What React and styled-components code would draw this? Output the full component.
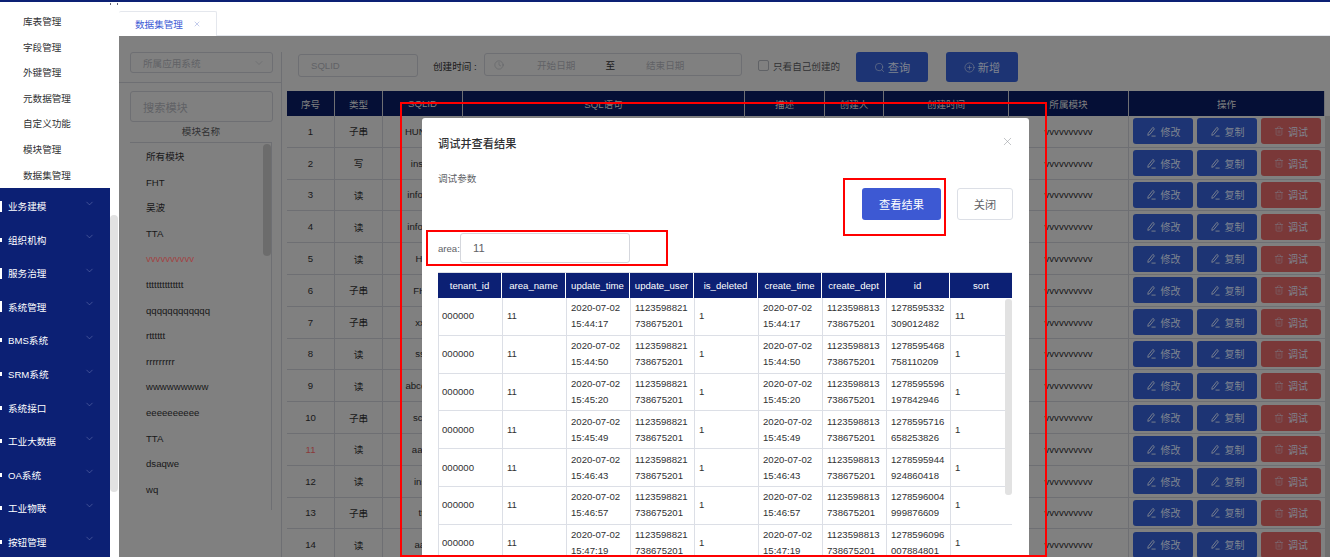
import React from "react";
import styled, { createGlobalStyle } from "styled-components";
import { ChevronDown, X, Search, CirclePlus, Clock, Trash2 } from "lucide-react";

const Global = createGlobalStyle`
  html, body { margin: 0; padding: 0; background: #fff; }
  body { font-family: "Liberation Sans", "Noto Sans CJK SC", sans-serif; font-size: 9.6px; color: #303133; }
  * { box-sizing: border-box; }
`;

const Page = styled.div`position: relative; width: 1330px; height: 557px; overflow: hidden; display: flex; flex-direction: column;`;
const TopBar = styled.div`height: 2px; background: #0c2074; flex: none;`;
const Body = styled.div`flex: 1; display: flex; min-height: 0;`;

const Sidebar = styled.aside`position: relative; width: 119px; flex: none; background: #fff; overflow: hidden;`;
const MenuCol = styled.div`width: 110px; height: 100%; display: flex; flex-direction: column;`;
const SubList = styled.div`padding-top: 7px; height: 186px; flex: none;`;
const SubItem = styled.div`height: 25.6px; line-height: 25.6px; padding-left: 23px; color: #303133;`;
const NavyList = styled.div`flex: 1; background: #0c2074; padding-top: 1.5px;`;
const NavyItem = styled.div`height: 33.55px; display: flex; align-items: center; color: #fff; gap: 6px; svg { margin-left: auto; margin-right: 15px; margin-top: -6px; color: #7d88bd; }`;
const Stub = styled.i`width: 2px; height: ${p => (p.$tall ? "11px" : "4px")}; background: #fff; flex: none; display: block;`;
const SideThumb = styled.div`position: absolute; left: 110px; top: 213px; width: 8px; height: 277px; background: #e2e2e2; border-radius: 4px;`;
const CornerMark = styled.div`position: absolute; left: 110px; top: 1px; width: 8px; height: 2px; border-left: 1px solid #667; border-right: 1px solid #667;`;

const Main = styled.main`flex: 1; min-width: 0; display: flex; flex-direction: column; position: relative;`;
const TabBar = styled.div`height: 34px; flex: none; padding-top: 9px; border-bottom: 1px solid #e4e7ed; display: flex;`;
const Tab = styled.div`width: 98px; height: 25px; background: #fff; border: 1px solid #e4e7ed; border-bottom: 0; border-left: 0; border-radius: 2px 2px 0 0; display: flex; align-items: center; padding-left: 16px; gap: 10px; color: #3d5bd4; svg { color: #8a9ad8; }`;

const Content = styled.div`flex: 1; min-height: 0; display: flex; background: #808080; color: #181819;`;
const LeftPanel = styled.section`width: 163px; flex: none; border-right: 1px solid #6e6f73; margin-top: 16px; display: flex; flex-direction: column;`;
const SelectBox = styled.div`margin-left: 11px; width: 143px; height: 21px; flex: none; border: 1px solid #6e6f73; border-radius: 3px; padding: 0 7px 0 12px; display: flex; align-items: center; justify-content: space-between; color: #606266;`;
const Rule = styled.div`height: 1px; background: #6e6f73; margin-top: 9px; flex: none;`;
const SearchBox = styled.div`margin: 8px 0 0 11px; width: 143px; height: 31px; flex: none; border: 1px solid #6e6f73; border-radius: 3px; padding-left: 12px; display: flex; align-items: center; color: #606266; font-size: 11.2px;`;
const ListTitle = styled.div`margin-left: 11px; width: 142px; height: 21px; flex: none; border-bottom: 1px solid #6e6f73; text-align: center; line-height: 20px; color: #303133;`;
const ModuleList = styled.div`position: relative; margin-left: 11px; width: 142px; height: 367px; border-right: 1px solid #6e6f73; padding: 1px 0 0 16px;`;
const ModuleItem = styled.div`height: 25.6px; line-height: 25.6px; color: ${p => (p.$red ? "#a04545" : "#181819")};`;
const ListThumb = styled.div`position: absolute; right: 0; top: 1px; width: 8px; height: 112px; background: #6c6c6c; border-radius: 4px;`;

const RightPanel = styled.section`flex: 1; min-width: 0; padding-left: 5px; display: flex; flex-direction: column;`;
const Toolbar = styled.div`height: 55px; flex: none; display: flex; align-items: flex-start; padding: 16px 0 0 11px;`;
const SqlInput = styled.div`width: 120px; height: 23px; margin-top: 2px; border: 1px solid #6e6f73; border-radius: 3px; padding-left: 12px; display: flex; align-items: center; color: #606266;`;
const Label = styled.div`margin: 7px 0 0 15px; width: 51px; color: #181819; white-space: pre;`;
const RangeBox = styled.div`width: 258px; height: 23px; margin-top: 1px; border: 1px solid #6e6f73; border-radius: 3px; display: flex; align-items: center; color: #55575c; padding-left: 9px; svg { flex: none; }`;
const RangeText = styled.span`margin-left: ${p => p.$gap}px; color: ${p => (p.$dark ? "#181819" : "#606266")};`;
const Check = styled.div`width: 11px; height: 11px; margin: 8px 4px 0 16px; border: 1px solid #606266; border-radius: 2px;`;
const CheckLabel = styled.div`margin-top: 7px; width: 83px; color: #303133; white-space: nowrap;`;
const ToolButton = styled.button`width: 72px; height: 30px; border: 0; border-radius: 3px; background: #1d3474; color: #7f8490; font: inherit; font-size: 11.2px; margin-right: ${p => p.$mr || 0}px; display: flex; align-items: center; justify-content: center; gap: 3px; padding: 0;`;

const Grid = styled.div`display: grid; grid-template-columns: 48px 48px 80px 282px 80px 59px 125px 120px 196px; width: 1038px;`;
const HeadRow = styled(Grid)`height: 25px; background: #050f36; color: #808080;`;
const HeadCell = styled.div`display: flex; align-items: center; justify-content: center; border-right: 1px solid #6e6f73; white-space: nowrap;`;
const DataRow = styled(Grid)`height: 31.8px; border-bottom: 1px solid #6e6f73;`;
const DataCell = styled.div`display: flex; align-items: center; justify-content: center; border-right: 1px solid #6e6f73; white-space: nowrap; overflow: hidden; color: ${p => (p.$red ? "#8a3a3a" : "#181819")};`;
const ActionCell = styled.div`display: flex; align-items: center; gap: 4px; padding-left: 4px;`;
const ActBtn = styled.button`width: 60px; height: 26px; border: 0; border-radius: 3px; background: ${p => (p.$danger ? "#7a3838" : "#1d3474")}; color: #7f8490; font: inherit; font-size: 10px; display: flex; align-items: center; justify-content: center; gap: 4px; padding: 0;`;
const TableWrap = styled.div`flex: 1; min-height: 0; overflow: hidden; position: relative;`;
const TableScroll = styled.div`position: absolute; left: 1038px; top: 25px; width: 5px; bottom: 0; background: #6f6f6f;`;

const Modal = styled.div`position: absolute; left: 303px; top: 116px; width: 607px; height: 470px; background: #fff; border-radius: 3px; padding: 0 16px; color: #606266;`;
const ModalHead = styled.div`height: 50px; display: flex; align-items: center; justify-content: space-between;`;
const ModalTitle = styled.div`font-size: 11.2px; color: #303133; font-weight: 500;`;
const Close = styled.span`display: flex; color: #909399; margin-right: -1px; margin-top: -4px;`;
const ActionRow = styled.div`height: 64px; display: flex; justify-content: space-between; align-items: flex-start;`;
const DebugLabel = styled.div`margin-top: 3px; color: #606266;`;
const ModalBtns = styled.div`display: flex; gap: 16px; margin-top: 20px;`;
const PrimaryBtn = styled.button`width: 79px; height: 32px; border: 0; border-radius: 3px; background: #3d59d3; color: #fff; font: inherit; font-size: 11.2px; padding: 0;`;
const PlainBtn = styled.button`width: 56px; height: 32px; border: 1px solid #dcdfe6; border-radius: 3px; background: #fff; color: #606266; font: inherit; font-size: 11.2px; padding: 0;`;
const ParamRow = styled.div`height: 32px; display: flex; align-items: center; margin-bottom: 8px;`;
const ParamName = styled.span`width: 22px; flex: none;`;
const ParamInput = styled.div`width: 170px; height: 30px; border: 1px solid #d5d7dd; border-radius: 3px; display: flex; align-items: center; padding-left: 12px; color: #606266; font-size: 11.2px;`;

const ResultTable = styled.div`position: relative; width: 574px; border-top: 1px solid #dcdfe6;`;
const RGrid = styled.div`display: grid; grid-template-columns: repeat(8, 64px) 62px;`;
const RHead = styled(RGrid)`height: 25px; background: #0c2074; color: #fff;`;
const RHeadCell = styled.div`display: flex; align-items: center; justify-content: center; border-right: 1px solid #fff; &:last-child { border-right: 0; }`;
const RRow = styled(RGrid)`height: 37.8px; border-bottom: 1px solid #dcdfe6; border-left: 1px solid #dcdfe6;`;
const RCell = styled.div`display: flex; align-items: center; padding-left: 4px; line-height: 16px; border-right: 1px solid #dcdfe6; color: #303133; margin-left: ${p => (p.$first ? "-1px" : 0)}; word-break: break-all; &:last-child { border-right: 0; }`;
const RThumb = styled.div`position: absolute; right: 0; top: 26px; width: 7px; height: 196px; background: #e2e2e2; border-radius: 3px;`;

const RedBox = styled.div`position: absolute; left: ${p => p.$x}px; top: ${p => p.$y}px; width: ${p => p.$w}px; height: ${p => p.$h}px; border: 2px solid #f00; pointer-events: none;`;

const Pen = () => (
  <svg width="11" height="11" viewBox="0 0 12 12" fill="none" stroke="currentColor" strokeWidth="1">
    <path d="M7.5 1.5 9.2 3 4 9.5 2 10.2 2.4 8Z" />
    <path d="M6 11h4.5" />
  </svg>
);

const sub = ["库表管理", "字段管理", "外键管理", "元数据管理", "自定义功能", "模块管理", "数据集管理"];
const navy = [["业务建模", 1], ["组织机构", 0], ["服务治理", 1], ["系统管理", 1], ["BMS系统", 0], ["SRM系统", 0], ["系统接口", 0], ["工业大数据", 0], ["OA系统", 0], ["工业物联", 0], ["按钮管理", 0]];
const modules = ["所有模块", "FHT", "吴波", "TTA", "vvvvvvvvvv", "tttttttttttttt", "qqqqqqqqqqqq", "rtttttt", "rrrrrrrrr", "wwwwwwwww", "eeeeeeeeee", "TTA", "dsaqwe", "wq"];
const types = ["子串", "写", "读", "读", "读", "子串", "子串", "读", "读", "子串", "读", "读", "子串", "读"];
const sqlids = ["HUNGH", "insert", "info_xx", "info_xx", "HH", "FHT", "xxx", "sss", "abcdefg", "sccc", "aaaa", "insx", "ttt", "aaa"];
const heads = ["序号", "类型", "SQLID", "SQL语句", "描述", "创建人", "创建时间", "所属模块", "操作"];
const rHeads = ["tenant_id", "area_name", "update_time", "update_user", "is_deleted", "create_time", "create_dept", "id", "sort"];
const rows = [
  ["15:44:17", "738675201", "1278595332", "309012482", "11"],
  ["15:44:50", "738675201", "1278595468", "758110209", "1"],
  ["15:45:20", "738675201", "1278595596", "197842946", "1"],
  ["15:45:49", "738675201", "1278595716", "658253826", "1"],
  ["15:46:43", "738675201", "1278595944", "924860418", "1"],
  ["15:46:57", "738675201", "1278596004", "999876609", "1"],
  ["15:47:19", "738675201", "1278596096", "007884801", "1"],
];

const Two = ({ a, b }) => <div>{a}<br />{b}</div>;

export default function App() {
  return (
    <Page>
      <Global />
      <TopBar />
      <Body>
        <Sidebar>
          <MenuCol>
            <SubList>{sub.map(s => <SubItem key={s}>{s}</SubItem>)}</SubList>
            <NavyList>
              {navy.map(([n, tall]) => (
                <NavyItem key={n}><Stub $tall={!!tall} /><span>{n}</span><ChevronDown size={11} strokeWidth={1} /></NavyItem>
              ))}
            </NavyList>
          </MenuCol>
          <SideThumb />
          <CornerMark />
        </Sidebar>
        <Main>
          <TabBar>
            <Tab>数据集管理<X size={8} strokeWidth={1.5} /></Tab>
          </TabBar>
          <Content>
            <LeftPanel>
              <SelectBox>所属应用系统<ChevronDown size={12} strokeWidth={1} /></SelectBox>
              <Rule />
              <SearchBox>搜索模块</SearchBox>
              <ListTitle>模块名称</ListTitle>
              <ModuleList>
                {modules.map((m, i) => <ModuleItem key={i} $red={i === 4}>{m}</ModuleItem>)}
                <ListThumb />
              </ModuleList>
            </LeftPanel>
            <RightPanel>
              <Toolbar>
                <SqlInput>SQLID</SqlInput>
                <Label>创建时间 :</Label>
                <RangeBox>
                  <Clock size={10} strokeWidth={1} />
                  <RangeText $gap={33}>开始日期</RangeText>
                  <RangeText $gap={30} $dark>至</RangeText>
                  <RangeText $gap={31}>结束日期</RangeText>
                </RangeBox>
                <Check />
                <CheckLabel>只看自己创建的</CheckLabel>
                <ToolButton $mr={18}><Search size={11} strokeWidth={1.2} />查询</ToolButton>
                <ToolButton><CirclePlus size={11} strokeWidth={1.2} />新增</ToolButton>
              </Toolbar>
              <TableWrap>
                <HeadRow>{heads.map(h => <HeadCell key={h}>{h}</HeadCell>)}</HeadRow>
                {types.map((t, i) => (
                  <DataRow key={i}>
                    <DataCell $red={i === 10}>{i + 1}</DataCell>
                    <DataCell>{t}</DataCell>
                    <DataCell>{sqlids[i]}</DataCell>
                    <DataCell />
                    <DataCell />
                    <DataCell />
                    <DataCell />
                    <DataCell>vvvvvvvvvv</DataCell>
                    <ActionCell>
                      <ActBtn><Pen />修改</ActBtn>
                      <ActBtn><Pen />复制</ActBtn>
                      <ActBtn $danger><Trash2 size={10} strokeWidth={1} />调试</ActBtn>
                    </ActionCell>
                  </DataRow>
                ))}
                <TableScroll />
              </TableWrap>
            </RightPanel>
          </Content>
          <Modal>
            <ModalHead>
              <ModalTitle>调试并查看结果</ModalTitle>
              <Close><X size={13} strokeWidth={1} /></Close>
            </ModalHead>
            <ActionRow>
              <DebugLabel>调试参数</DebugLabel>
              <ModalBtns>
                <PrimaryBtn>查看结果</PrimaryBtn>
                <PlainBtn>关闭</PlainBtn>
              </ModalBtns>
            </ActionRow>
            <ParamRow>
              <ParamName>area:</ParamName>
              <ParamInput>11</ParamInput>
            </ParamRow>
            <ResultTable>
              <RHead>{rHeads.map(h => <RHeadCell key={h}>{h}</RHeadCell>)}</RHead>
              {rows.map((r, i) => (
                <RRow key={i}>
                  <RCell $first>000000</RCell>
                  <RCell>11</RCell>
                  <RCell><Two a="2020-07-02" b={r[0]} /></RCell>
                  <RCell><Two a="1123598821" b={r[1]} /></RCell>
                  <RCell>1</RCell>
                  <RCell><Two a="2020-07-02" b={r[0]} /></RCell>
                  <RCell><Two a="1123598813" b={r[1]} /></RCell>
                  <RCell><Two a={r[2]} b={r[3]} /></RCell>
                  <RCell>{r[4]}</RCell>
                </RRow>
              ))}
              <RThumb />
            </ResultTable>
          </Modal>
          <RedBox $x={281} $y={100} $w={647} $h={455} />
          <RedBox $x={724} $y={176} $w={103} $h={58} />
          <RedBox $x={307} $y={228} $w={242} $h={36} />
        </Main>
      </Body>
    </Page>
  );
}
